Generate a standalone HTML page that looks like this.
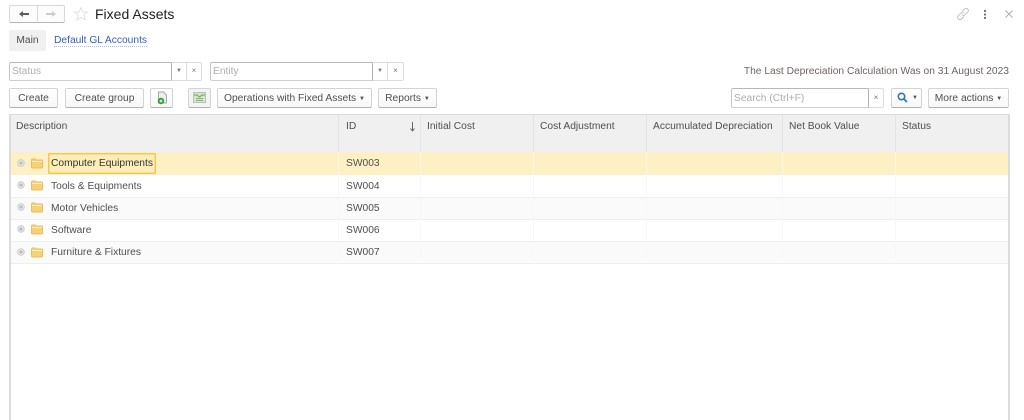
<!DOCTYPE html>
<html><head><meta charset="utf-8"><style>
html,body{margin:0;padding:0;background:#fff}
body{width:1024px;height:420px;overflow:hidden;position:relative;font-family:"Liberation Sans",sans-serif;font-size:10.25px;color:#4f4f4f}
#w{position:absolute;left:0;top:0;width:1024px;height:420px;filter:blur(.3px)}
.a{position:absolute;box-sizing:border-box;white-space:nowrap}
.b{position:absolute;box-sizing:border-box;top:88px;height:20px;background:linear-gradient(#fff,#f7f7f7);border:1px solid #d4d4d4;border-bottom-color:#b0b0b0;border-radius:2px;text-align:center;line-height:19px;color:#4f4f4f;white-space:nowrap}
.i{position:absolute;box-sizing:border-box;background:#fff;border:1px solid #cfcfcf;border-top-color:#b8b8b8;border-left-color:#c4c4c4;border-radius:2px 0 0 2px;color:#aeaeae;line-height:17px;padding-left:2px}
.s{position:absolute;box-sizing:border-box;background:#fff;border:1px solid #dcdcdc;text-align:center;color:#777;line-height:16px;font-size:8px}
.ar{font-size:6px;vertical-align:1px}
.th{position:absolute;top:115px;height:37px;background:#f0f0f0;border-right:1px solid #e4e4e4;box-sizing:border-box;padding:5px 0 0 7px;line-height:13px;color:#4f4f4f;white-space:nowrap}
.r{position:absolute;left:11px;width:997px;border-bottom:1px solid #eeeeee;box-sizing:border-box}
.t{position:absolute;left:51px;line-height:13px;color:#4f4f4f;white-space:nowrap}
.id{position:absolute;left:346px;line-height:13px;color:#4f4f4f}
.v{position:absolute;width:1px;background:#f7f7f7}
</style></head><body><div id="w">
<div class="a" style="left:9px;top:5px;width:56px;height:18px;border:1px solid #d8d8d8;border-bottom-color:#b4b4b4;border-radius:2px;background:#fcfcfc"></div>
<div class="a" style="left:37px;top:5px;width:1px;height:18px;background:#d8d8d8"></div>
<svg class="a" style="left:18px;top:9px" width="12" height="10"><path d="M1 5L5 2V4H11V6H5V8Z" fill="#5c5c5c"/></svg>
<svg class="a" style="left:45px;top:9px" width="12" height="10"><path d="M11 5L7 2V4H1V6H7V8Z" fill="#cccccc"/></svg>
<svg class="a" style="left:73px;top:6px" width="16" height="16"><path d="M8 1.5L9.8 6H14.5L10.8 9.1L12.2 14L8 11.2L3.8 14L5.2 9.1L1.5 6H6.2Z" fill="none" stroke="#e2e2e2"/></svg>
<div class="a" style="left:95px;top:6px;font-size:14px;line-height:17px;color:#222">Fixed Assets</div>
<svg class="a" style="left:956px;top:7px" width="14" height="14" fill="none" stroke="#bbb" stroke-width=".9"><path d="M6 4.5L8.5 2a2.1 2.1 0 0 1 3.2 3.2L9 7.8a2.1 2.1 0 0 1-3 0"/><path d="M8 9.5L5.5 12a2.1 2.1 0 0 1-3.2-3.2L5 6.2a2.1 2.1 0 0 1 3 0"/></svg>
<svg class="a" style="left:983px;top:9px" width="4" height="11"><path d="M1 1h2v2H1zM1 4.5h2v2H1zM1 8h2v2H1z" fill="#777"/></svg>
<svg class="a" style="left:1004px;top:9px" width="10" height="10"><path d="M1.5 1.5L8.5 8.5M8.5 1.5L1.5 8.5" stroke="#aaa" fill="none" stroke-width=".9"/></svg>

<div class="a" style="left:9px;top:30px;width:37px;height:21px;background:#f0f0f0;border-radius:2px;text-align:center;line-height:22px">Main</div>
<div class="a" style="left:54px;top:34px;height:13px;line-height:14px;color:#3560ba;border-bottom:1px dotted #aebde3">Default GL Accounts</div>

<div class="i" style="left:9px;top:62px;width:163px;height:19px">Status</div>
<div class="s" style="left:171px;top:62px;width:16px;height:19px;border-left-color:#b4b4b4"><span class="ar">▼</span></div>
<div class="s" style="left:186px;top:62px;width:16px;height:19px;border-radius:0 2px 2px 0">×</div>
<div class="i" style="left:210px;top:62px;width:163px;height:19px">Entity</div>
<div class="s" style="left:372px;top:62px;width:16px;height:19px;border-left-color:#b4b4b4"><span class="ar">▼</span></div>
<div class="s" style="left:387px;top:62px;width:17px;height:19px;border-radius:0 2px 2px 0">×</div>
<div class="a" style="right:15px;top:65px;line-height:14px;color:#6f6464">The Last Depreciation Calculation Was on 31 August 2023</div>

<div class="b" style="left:9px;width:49px">Create</div>
<div class="b" style="left:65px;width:79px">Create group</div>
<div class="b" style="left:150px;width:23px"></div>
<svg class="a" style="left:156px;top:91px" width="12" height="14"><path d="M2.5 1H7.5L10.5 4V12H2.5Z" fill="#eee" stroke="#aaa"/><circle cx="5" cy="10" r="3.2" fill="#2f9a3f"/><path d="M3.5 10h3M5 8.5v3" stroke="#fff"/></svg>
<div class="b" style="left:188px;width:23px;background:#f4f4f4"></div>
<svg class="a" style="left:193px;top:92px" width="13" height="11"><rect x=".5" y=".5" width="12" height="10" fill="#d6e6cc" stroke="#b5c7b0"/><path d="M1 3h3l2.5 2L9 3h3" stroke="#5fa855" fill="none"/><path d="M3 6.5h7M3 8.5h7" stroke="#83b67a"/></svg>
<div class="b" style="left:217px;width:155px">Operations with Fixed Assets <span class="ar">▼</span></div>
<div class="b" style="left:378px;width:59px">Reports <span class="ar">▼</span></div>

<div class="i" style="left:731px;top:88px;width:138px;height:20px;line-height:19px">Search (Ctrl+F)</div>
<div class="s" style="left:868px;top:88px;width:16px;height:20px;border-left-color:#b4b4b4;border-radius:0 2px 2px 0;line-height:18px">×</div>
<div class="b" style="left:891px;width:31px"></div>
<svg class="a" style="left:897px;top:92px" width="11" height="11"><circle cx="4.5" cy="4.5" r="3.2" fill="none" stroke="#2b78b8" stroke-width="1.6"/><path d="M7 7L10 10" stroke="#2b78b8" stroke-width="1.8"/></svg>
<div class="a" style="left:912px;top:92px;font-size:6px;line-height:12px;color:#555">▼</div>
<div class="b" style="left:928px;width:81px">More actions <span class="ar">▼</span></div>

<div class="a" style="left:9px;top:114px;width:1001px;height:306px;border:1px solid #dcdcdc;border-width:1px 2px 0 2px"></div>
<div class="th" style="left:11px;width:328px;padding-left:5px">Description</div>
<div class="th" style="left:339px;width:82px">ID</div>
<svg class="a" style="left:408px;top:121px" width="9" height="11"><path d="M4.5 1V9.5M2.5 7.5L4.5 10L6.5 7.5" fill="none" stroke="#666"/></svg>
<div class="th" style="left:421px;width:113px;padding-left:6px">Initial Cost</div>
<div class="th" style="left:534px;width:113px;padding-left:6px">Cost Adjustment</div>
<div class="th" style="left:647px;width:136px;padding-left:6px">Accumulated Depreciation</div>
<div class="th" style="left:783px;width:113px;padding-left:6px">Net Book Value</div>
<div class="th" style="left:896px;width:112px;padding-left:6px;border-right:0">Status</div>

<div class="r" style="top:152px;height:24px;background:#fdf0c4;border-bottom:1px solid #fff"></div>
<div class="r" style="top:176px;height:22px;background:#fff"></div>
<div class="r" style="top:198px;height:22px;background:#fafafa"></div>
<div class="r" style="top:220px;height:22px;background:#fff"></div>
<div class="r" style="top:242px;height:22px;background:#fafafa"></div>
<div class="v" style="left:338px;top:152px;height:112px"></div>
<div class="v" style="left:420px;top:152px;height:112px"></div>
<div class="v" style="left:533px;top:152px;height:112px"></div>
<div class="v" style="left:646px;top:152px;height:112px"></div>
<div class="v" style="left:782px;top:152px;height:112px"></div>
<div class="v" style="left:895px;top:152px;height:112px"></div>
<div class="v" style="left:338px;top:152px;height:23px;background:#fff8df"></div>
<div class="v" style="left:420px;top:152px;height:23px;background:#fff8df"></div>
<div class="v" style="left:533px;top:152px;height:23px;background:#fff8df"></div>
<div class="v" style="left:646px;top:152px;height:23px;background:#fff8df"></div>
<div class="v" style="left:782px;top:152px;height:23px;background:#fff8df"></div>
<div class="v" style="left:895px;top:152px;height:23px;background:#fff8df"></div>

<div class="a" style="left:48px;top:153px;width:108px;height:21px;border:1px solid #f2c650;box-shadow:inset 0 0 0 .5px #f5cf68;background:#fdeeb8;border-radius:1px"></div>

<svg width="0" height="0" style="position:absolute"><defs>
<g id="x"><circle cx="4" cy="4" r="3.2" fill="#f2f2f2" stroke="#c8c8c8"/><path d="M2 4h4M4 2v4" stroke="#aaa"/></g>
<g id="f"><path d="M.5 9V2a1 1 0 0 1 1-1H4L5 2H10.5a1 1 0 0 1 1 1V9a1 1 0 0 1-1 1H1.5a1 1 0 0 1-1-1Z" fill="#f7d175" stroke="#e8bf5e"/><path d="M1 3.5H11" stroke="#fdf0c4"/></g>
</defs></svg>
<svg class="a" style="left:17px;top:159px" width="8" height="8"><use href="#x"/></svg>
<svg class="a" style="left:31px;top:158px" width="12" height="11"><use href="#f"/></svg>
<div class="t" style="top:157px;color:#333">Computer Equipments</div><div class="id" style="top:157px">SW003</div>
<svg class="a" style="left:17px;top:181px" width="8" height="8"><use href="#x"/></svg>
<svg class="a" style="left:31px;top:180px" width="12" height="11"><use href="#f"/></svg>
<div class="t" style="top:180px">Tools &amp; Equipments</div><div class="id" style="top:180px">SW004</div>
<svg class="a" style="left:17px;top:203px" width="8" height="8"><use href="#x"/></svg>
<svg class="a" style="left:31px;top:202px" width="12" height="11"><use href="#f"/></svg>
<div class="t" style="top:202px">Motor Vehicles</div><div class="id" style="top:202px">SW005</div>
<svg class="a" style="left:17px;top:225px" width="8" height="8"><use href="#x"/></svg>
<svg class="a" style="left:31px;top:224px" width="12" height="11"><use href="#f"/></svg>
<div class="t" style="top:224px">Software</div><div class="id" style="top:224px">SW006</div>
<svg class="a" style="left:17px;top:248px" width="8" height="8"><use href="#x"/></svg>
<svg class="a" style="left:31px;top:247px" width="12" height="11"><use href="#f"/></svg>
<div class="t" style="top:246px">Furniture &amp; Fixtures</div><div class="id" style="top:246px">SW007</div>
</div></body></html>
